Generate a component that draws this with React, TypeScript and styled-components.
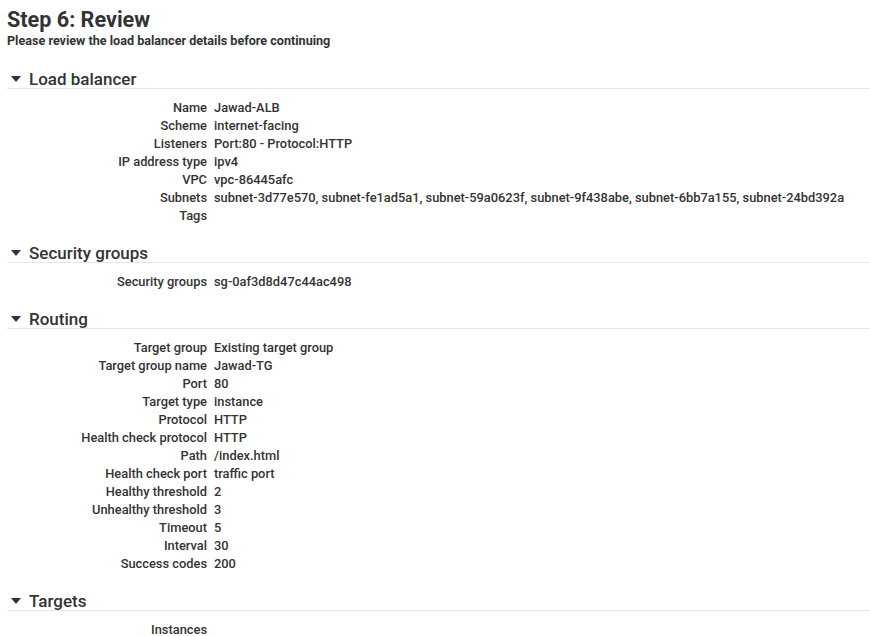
import styled, { createGlobalStyle } from "styled-components";

const GlobalStyle = createGlobalStyle`
  body {
    margin: 0;
    background: #ffffff;
    font-family: Roboto, "Liberation Sans", Arial, sans-serif;
    color: #333333;
  }
`;

const Page = styled.div`
  padding: 6px 0 0 7px;
`;

const Title = styled.h1`
  margin: 0;
  font-size: 21.6px;
  font-weight: 700;
  line-height: 28px;
  color: #333;
`;

const Subtitle = styled.p`
  margin: 0;
  font-size: 12.6px;
  font-weight: 700;
  line-height: 14px;
  color: #333;
`;

const Section = styled.section`
  margin-top: 19px;
  &:first-of-type {
    margin-top: 22px;
  }
`;

const SectionHeader = styled.div`
  display: flex;
  align-items: center;
  gap: 8px;
  padding-left: 4px;
  height: 18px;
  border-bottom: 1px solid #e6e6e6;
  font-size: 17px;
  font-weight: 500;
  color: #333;
`;

const Caret = styled.span`
  width: 0;
  height: 0;
  border-left: 5px solid transparent;
  border-right: 5px solid transparent;
  border-top: 6px solid #333;
`;

const Rows = styled.div`
  display: grid;
  grid-template-columns: 200px 1fr;
  column-gap: 7px;
  padding-top: 10px;
  font-size: 12.85px;
  font-weight: 500;
  line-height: 18px;
`;

const Label = styled.div`
  text-align: right;
  color: #333;
`;

const Value = styled.div`
  color: #333;
  white-space: nowrap;
`;

type Row = [string, string];

const sections: { title: string; rows: Row[] }[] = [
  {
    title: "Load balancer",
    rows: [
      ["Name", "Jawad-ALB"],
      ["Scheme", "internet-facing"],
      ["Listeners", "Port:80 - Protocol:HTTP"],
      ["IP address type", "ipv4"],
      ["VPC", "vpc-86445afc"],
      [
        "Subnets",
        "subnet-3d77e570, subnet-fe1ad5a1, subnet-59a0623f, subnet-9f438abe, subnet-6bb7a155, subnet-24bd392a",
      ],
      ["Tags", ""],
    ],
  },
  {
    title: "Security groups",
    rows: [["Security groups", "sg-0af3d8d47c44ac498"]],
  },
  {
    title: "Routing",
    rows: [
      ["Target group", "Existing target group"],
      ["Target group name", "Jawad-TG"],
      ["Port", "80"],
      ["Target type", "instance"],
      ["Protocol", "HTTP"],
      ["Health check protocol", "HTTP"],
      ["Path", "/index.html"],
      ["Health check port", "traffic port"],
      ["Healthy threshold", "2"],
      ["Unhealthy threshold", "3"],
      ["Timeout", "5"],
      ["Interval", "30"],
      ["Success codes", "200"],
    ],
  },
  {
    title: "Targets",
    rows: [["Instances", ""]],
  },
];

export default function App() {
  return (
    <>
      <GlobalStyle />
      <Page>
        <Title>Step 6: Review</Title>
        <Subtitle>Please review the load balancer details before continuing</Subtitle>
        {sections.map((s) => (
          <Section key={s.title}>
            <SectionHeader>
              <Caret />
              {s.title}
            </SectionHeader>
            <Rows>
              {s.rows.map(([label, value]) => (
                <>
                  <Label key={label + "l"}>{label}</Label>
                  <Value key={label + "v"}>{value}</Value>
                </>
              ))}
            </Rows>
          </Section>
        ))}
      </Page>
    </>
  );
}
